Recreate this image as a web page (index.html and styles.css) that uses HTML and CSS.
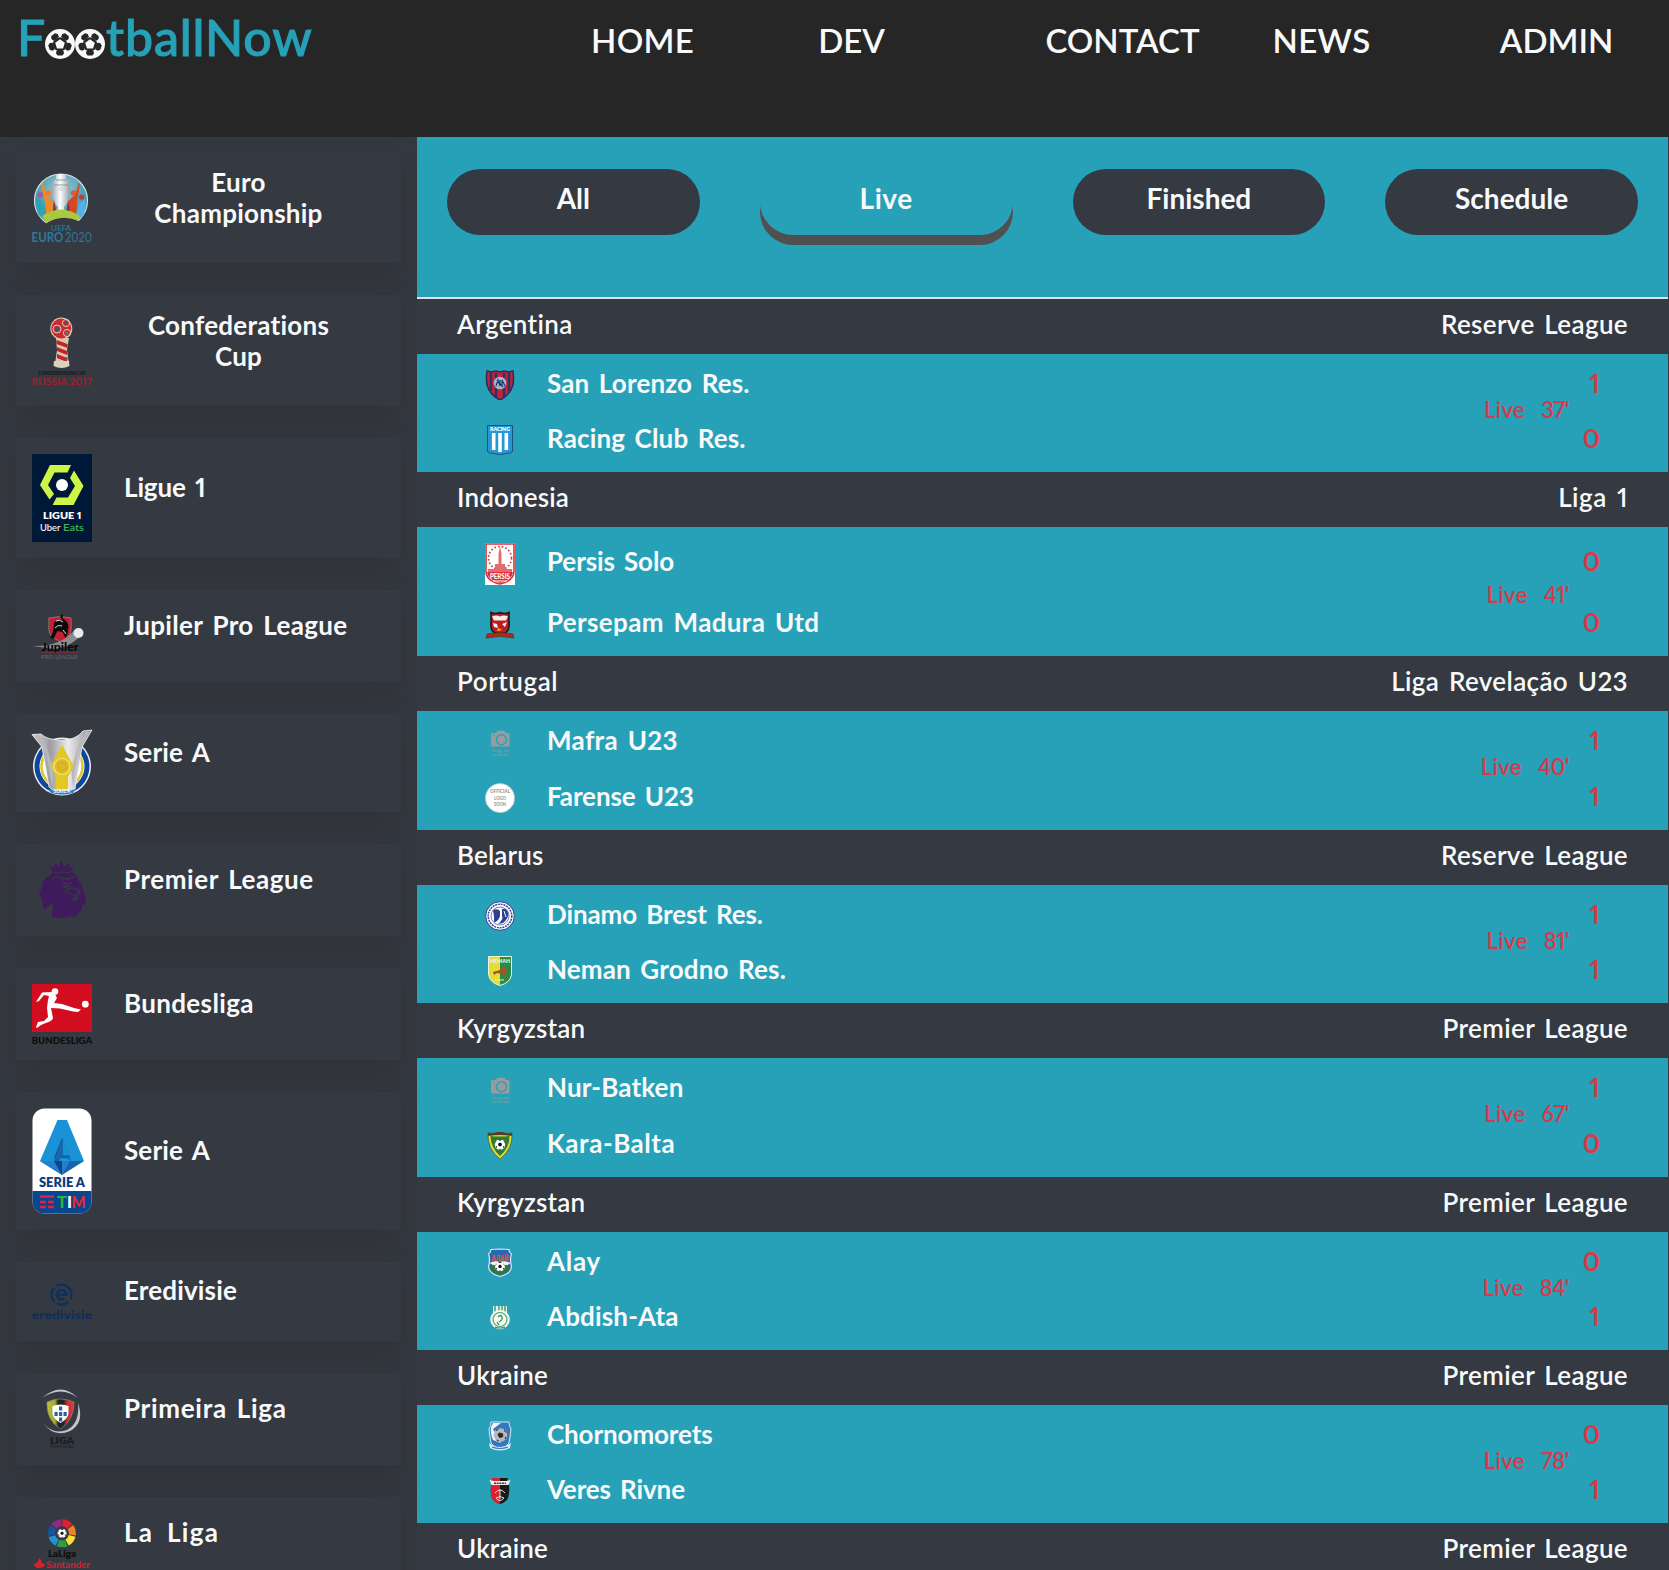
FILE: index.html
```
<!DOCTYPE html>
<html lang="en">
<head>
<meta charset="utf-8">
<title>FootballNow</title>
<link rel="stylesheet" href="styles.css">
</head>
<body>
<svg class="defs" aria-hidden="true">
  <symbol id="futbol" viewBox="0 0 30 30">
    <circle cx="15" cy="15" r="15" fill="#f8f9fa"/>
    <g fill="#262626">
      <circle cx="15" cy="15.3" r="7"/>
      <g id="patch"><path d="M11.6 21.5h6.8l.6 2.9-1.7 2.2h-4.6l-1.7-2.2z"/></g>
      <use href="#patch" transform="rotate(72 15 15)"/>
      <use href="#patch" transform="rotate(144 15 15)"/>
      <use href="#patch" transform="rotate(216 15 15)"/>
      <use href="#patch" transform="rotate(288 15 15)"/>
    </g>
    <path d="M15 10.2l4.8 3.6-1.8 5.6h-6l-1.8-5.6z" fill="#f8f9fa"/>
  </symbol>
  <symbol id="ball" viewBox="0 0 12 12">
    <circle cx="6" cy="6" r="5.8" fill="#fff"/>
    <path d="M6 3.7l2.2 1.6-.8 2.6H4.6l-.8-2.6zM3.6.9L6 1.8 8.4.9 6 .2zM.3 5.2L1.9 3.4l-.2-1.2zM11.7 5.2L10.1 3.4l.2-1.2zM2.2 10.3l.4-2.3-1.6-.6zM9.8 10.3l-.4-2.3 1.6-.6zM4.7 11.5L6 10.4l1.3 1.1z" fill="#111"/>
  </symbol>
  <symbol id="noimage" viewBox="0 0 30 30">
    <path d="M7 6h4l1.600-2.200h6.800L21 6h2.500q1 0 1 1v11.500q0 1-1 1H7q-1 0-1-1V7q0-1 1-1z" fill="#999b9d"/>
    <circle cx="16.400" cy="12.700" r="5" fill="none" stroke="#26a1b8" stroke-width="1.500"/>
    <circle cx="8.800" cy="7.700" r=".7" fill="#26a1b8"/>
    <text x="6.500" y="24.500" textLength="18" font-size="3.800" font-weight="700" fill="#8b9699">image not</text>
    <text x="7" y="28.500" textLength="16.500" font-size="3.800" font-weight="700" fill="#8b9699">available</text>
  </symbol>
</svg>

<header class="topbar">
  <a class="brand"><span class="brand-f">F</span><svg class="brand-ball"><use href="#futbol"/></svg><svg class="brand-ball"><use href="#futbol"/></svg><span class="brand-rest">tballNow</span></a>
  <nav class="menu">
    <a class="tr-1">HOME</a><a>DEV</a><a>CONTACT</a><a class="tr-1">NEWS</a><a>ADMIN</a>
  </nav>
</header>

<div class="page">
<aside class="leagues">
  <div class="league two-lines">
    <svg width="60" height="78" viewBox="0 0 60 78">
      <defs><radialGradient id="eg" cx=".5" cy=".3" r=".7"><stop offset="0" stop-color="#9fd0d8"/><stop offset="1" stop-color="#1d7f9c"/></radialGradient>
      <linearGradient id="cupg"><stop offset="0" stop-color="#9aa4ad"/><stop offset=".45" stop-color="#fff"/><stop offset="1" stop-color="#8f9aa4"/></linearGradient>
      <clipPath id="ec"><path d="M0 0H60V48L47 52Q29 44 13 55L0 44z"/></clipPath></defs>
      <g clip-path="url(#ec)">
        <circle cx="29" cy="31.500" r="26.500" fill="url(#eg)" stroke="#d5e2e6" stroke-width="1.200"/>
        <path d="M6 45Q2 33 6 28l5 6 6 22z" fill="#2fa3b5"/><circle cx="8.500" cy="26" r="2.800" fill="#a75a9f"/>
        <path d="M9 15l2-1 4 12 5 5 4 22H15L13 33z" fill="#f08a24"/><circle cx="16.500" cy="24" r="2.800" fill="#ef7d2e"/>
        <path d="M48 15l-1-1-4 12-7 6-3 22h11L45 33z" fill="#d8481f"/><circle cx="41.500" cy="24" r="2.800" fill="#e2592a"/>
        <path d="M53 30l-6 5-6 20 10-8q4-7 2-17z" fill="#56b1e8"/><circle cx="49.500" cy="28" r="2.600" fill="#c23a3c"/>
        <path d="M22 30l4 22h-6zM36 32l-3 20h7z" fill="#8b2c53"/>
        <path d="M24 5h10v5q5 3 4 11-1 13-6 17l1 8h-8l1-8q-5-4-6-17-1-8 4-11z" fill="url(#cupg)"/>
        <path d="M24 11h10M22 16h14" stroke="#78858f" fill="none" stroke-width=".8"/><circle cx="29" cy="20" r="1.600" fill="none" stroke="#aab4bb" stroke-width=".6"/>
        <path d="M10 47q19-13 38 0l-3 8q-16-8-30 0z" fill="#a9c93f"/>
      </g>
      <text x="19" y="61.500" textLength="20" font-size="8" font-weight="700" fill="#2f6f8c">UEFA</text>
      <text x="-.5" y="73" textLength="32" lengthAdjust="spacingAndGlyphs" font-size="12.500" font-weight="700" fill="#2c7a9c">EURO</text>
      <text x="33" y="73" textLength="27" lengthAdjust="spacingAndGlyphs" font-size="12.500" font-weight="400" fill="#2c7a9c">2020</text>
    </svg>
    <h2>Euro<br>Championship</h2>
  </div>
  <div class="league two-lines confed">
    <svg width="60" height="79" viewBox="0 0 60 79">
      <path d="M24 27l1 12-2 14q6 4 14 0l-2-14 2-12z" fill="#d8c8ab"/>
      <path d="M24.500 29l11 4v4l-11-4zM25 36l10 4v4L25 40zM25 43l10 4v4l-10-4z" fill="#c8202c"/>
      <circle cx="29.300" cy="17.500" r="11" fill="#dccdb0"/><circle cx="29.300" cy="17.500" r="10" fill="#cc2a33"/>
      <g fill="none" stroke="#dccdb0" stroke-width="1"><circle cx="25" cy="18" r="4"/><circle cx="34" cy="12" r="3.600"/><circle cx="35" cy="22" r="3.600"/></g>
      <circle cx="25" cy="18" r="2" fill="#205f8c"/><circle cx="34" cy="12" r="1.500" fill="#205f8c"/><circle cx="35" cy="22" r="1.500" fill="#2e8e96"/><circle cx="34.500" cy="47.500" r="1.500" fill="#2e6f9c"/>
      <path d="M22 50h15l.5 5q-8 4-16 0z" fill="#d9d2bd"/>
      <text x="6.500" y="64.300" textLength="47" lengthAdjust="spacingAndGlyphs" font-size="4.500" font-weight="800" fill="#17191c">CONFEDERATIONS CUP</text>
      <text x="-.5" y="73.500" textLength="60.500" lengthAdjust="spacingAndGlyphs" font-size="10" font-weight="600" fill="#a81e27">RUSSIA 2017</text>
    </svg>
    <h2>Confederations<br>Cup</h2>
  </div>
  <div class="league">
    <svg width="60" height="88" viewBox="0 0 60 88">
      <path fill="#001838" d="M0 0h60v88H0z"/>
      <path fill="#cdf545" d="M18 11h21l-3.500 7.500H22.500L16 31l6 9-4.500 5.500L8 31zM42 16.500L51.500 32 41.500 51H20.500L24.500 43.500H36L43 32l-5-8z"/>
      <circle cx="30" cy="31" r="6" fill="#fff"/>
      <text x="11" y="65" textLength="38.500" lengthAdjust="spacingAndGlyphs" font-size="10" font-weight="800" fill="#fff">LIGUE 1</text>
      <text x="8" y="76.700" textLength="20.500" lengthAdjust="spacingAndGlyphs" font-size="9.500" font-weight="500" fill="#fff">Uber</text>
      <text x="31" y="76.700" textLength="21" lengthAdjust="spacingAndGlyphs" font-size="9.500" font-weight="600" fill="#41b455">Eats</text>
    </svg>
    <h2 class="tr-0">Ligue 1</h2>
  </div>
  <div class="league">
    <svg width="60" height="60" viewBox="0 0 60 60">
      <path d="M.5 40q28 1 43-17l4 8Q36 42 22 43z" fill="#8a8c90"/>
      <path d="M16.800 12q11-3 22.400 0v11q0 8-11.200 12.500Q16.800 31 16.800 23z" fill="#c41f35" stroke="#999" stroke-width=".6"/>
      <path d="M22 17q3-4 8-3l-2-4 3-2-.5 4q5 3 6 8l-1 8-2 4-3-6-5-1-4 8-3-1 3-8z" fill="#0a0a0a"/>
      <path d="M24 15q4-2 7 1M23 22q3-4 7-2M31 24l3 4" stroke="#ddd" fill="none" stroke-width="1"/>
      <circle cx="46.500" cy="27" r="5" fill="#e9e9ea"/>
      <text x="9.500" y="44.500" textLength="37" lengthAdjust="spacingAndGlyphs" font-size="11.500" font-weight="900" fill="#070707">Jupiler</text>
      <path d="M10 46.500h36" stroke="#8c2733" stroke-width=".7"/>
      <text x="9" y="52.500" textLength="37" lengthAdjust="spacingAndGlyphs" font-size="6.300" font-weight="700" fill="#5a5d61">PRO LEAGUE</text>
    </svg>
    <h2 class="tr-1">Jupiler Pro League</h2>
  </div>
  <div class="league">
    <svg width="60" height="66" viewBox="0 0 60 66">
      <defs><linearGradient id="sil"><stop offset="0" stop-color="#e2e2e4"/><stop offset=".3" stop-color="#9c9ca1"/><stop offset=".6" stop-color="#ececee"/><stop offset="1" stop-color="#8e8e93"/></linearGradient></defs>
      <circle cx="30" cy="36.500" r="29" fill="#eef0f2"/><circle cx="30" cy="36.500" r="27.500" fill="#0b489c"/><circle cx="30" cy="36.500" r="22.500" fill="#fff"/>
      <circle cx="30" cy="36.500" r="20.500" fill="none" stroke="#dfc62c" stroke-width="2.500"/>
      <path d="M0 4.500l9-.5q6 6 21 6Q44 10 51 1l9-1-10 17-7 42q-3 2-6 2H23q-3-1-6-4L10 17z" fill="url(#sil)" stroke="#f3f3f4" stroke-width=".8"/>
      <path d="M2 5.500L14 22l6 35 2-18-8-23-7-11zM58 1.500L46 22l-5 35-2-18 7-22 8-15z" fill="#b9b9bd"/>
      <path d="M30 15l11.500 21L36 47v12H24V47l-5.500-11z" fill="#e3c822"/>
      <circle cx="30" cy="36.500" r="8" fill="#dcbc26" stroke="#f3e48a" stroke-width="1.200"/><circle cx="30" cy="36.500" r="4" fill="none" stroke="#c9a91c"/>
      <path d="M16 59q14 5 28 0l-3 4q-11 3-22 0z" fill="#2f7fc4"/>
      <text x="21.500" y="63" textLength="17" lengthAdjust="spacingAndGlyphs" font-size="4.500" font-weight="800" fill="#e4eef8">SERIE A</text>
    </svg>
    <h2>Serie A</h2>
  </div>
  <div class="league">
    <svg width="60" height="60" viewBox="0 0 60 60" fill="#3f1a5c">
      <path d="M16.500 5.500l5 2.500 1-5.500 4 4.500 2.800-6 3 6 4.500-4.700.5 5.700 3.800-2-1.600 5.500q-8.500-3-19 .200z"/>
      <path d="M21 12q9-4 18 0 6 2 7 9l4 3 1 7q3 3 3 7l-1 7-2-1-2 7-4 3-3 4-2-2q-6 2-12 2l-8-1 1-15-8 8-2-3-1-8-3-5 3-7 1-6 6-6 1 2q1-4 4-5z"/>
      <path d="M23 13.500q7-3 15 0M20 19q4-4 9-1l8 1 5-2M30 22l5 2 5-1M33 31l6-3 7 1-1 8-5-3zM40 39l6-1-3 3z" fill="none" stroke="#353941" stroke-width="1.400"/>
      <path d="M27 23q6 4 12 1l-5 5zM46 28l3 4-2 5z" fill="#353941"/>
    </svg>
    <h2 class="tr-2">Premier League</h2>
  </div>
  <div class="league">
    <svg width="60" height="60" viewBox="0 0 60 60">
      <path fill="#d10d1f" d="M0 0h60v48H0z"/>
      <g fill="#fff"><circle cx="23" cy="7.500" r="3.300"/><circle cx="53.300" cy="20.200" r="3.400"/>
      <path d="M10 8.500l9.500-.5 3.500 2 2 4-3 5 8 1 12 4 7 1.500-3 2.500-5-.5-13-3-9-.5 2 10q-1 3-6 4.500l-6 2.500L5 44l-1-1 2-5 6-1 4-4-1-9 1-8 1-4-5-1-5 6-3 1z"/></g>
      <text x="-.3" y="59.500" textLength="60.500" lengthAdjust="spacingAndGlyphs" font-size="9" font-weight="900" fill="#0c0d0e">BUNDESLIGA</text>
    </svg>
    <h2 class="tr-1">Bundesliga</h2>
  </div>
  <div class="league">
    <svg width="60" height="106" viewBox="0 0 60 106">
      <defs><clipPath id="sc"><rect x=".5" y=".5" width="59" height="105" rx="12"/></clipPath></defs>
      <g clip-path="url(#sc)"><path fill="#fff" d="M0 0h60v106H0z"/><path fill="#08468f" d="M0 83h60v23H0z"/></g>
      <path d="M25.500 12h9.500L52 53H8z" fill="#1a93d6"/>
      <path d="M30 30l8 20H22z" fill="#12508f"/><path d="M30 30l9 23-5-4h-5l-2 4h-5z" fill="#1766b0"/><path d="M31 32l6 15h-6z" fill="#1a93d6"/>
      <path d="M8 53h44L30 67z" fill="#1563ac"/><path d="M8 53h14l8 14zM38 53H30v14z" fill="#2380cf"/><path d="M22 53h8v14z" fill="#0d4586"/>
      <text x="7" y="79" textLength="46" lengthAdjust="spacingAndGlyphs" font-size="12.500" font-weight="800" fill="#0c3c7c">SERIE A</text>
      <path d="M8 88.500h14M8 94h6M16 94h6M8 99h6M16 99h6" stroke="#e2203c" stroke-width="2.400"/>
      <g font-size="16.500" font-weight="900"><text x="25" y="100" fill="#2cb23c">T</text><text x="35" y="100" fill="#fff">I</text><text x="39.500" y="100" textLength="14" lengthAdjust="spacingAndGlyphs" fill="#ee2530">M</text></g>
    </svg>
    <h2>Serie A</h2>
  </div>
  <div class="league">
    <svg width="60" height="47" viewBox="0 0 60 47">
      <g fill="none" stroke="#0c2f5f" stroke-width="2.200"><path d="M22.500 9.500a10 10 0 0 0 0 14.500M24.500 8a10 10 0 0 1 14 13M26 16.700h8.500a4.800 4.800 0 1 0-2 4M25 25.500a10 10 0 0 0 11.500-2"/></g>
      <text x="-.5" y="40.700" textLength="60.500" lengthAdjust="spacingAndGlyphs" font-size="11.500" font-weight="900" fill="#0c2f5f">eredivisie</text>
    </svg>
    <h2>Eredivisie</h2>
  </div>
  <div class="league">
    <svg width="60" height="60" viewBox="0 0 60 60">
      <defs><linearGradient id="pg"><stop offset="0" stop-color="#b3c23a"/><stop offset=".3" stop-color="#a8a62e"/><stop offset=".42" stop-color="#222"/><stop offset=".6" stop-color="#222"/><stop offset=".75" stop-color="#c9302c"/><stop offset="1" stop-color="#dd3b36"/></linearGradient></defs>
      <path d="M10 9Q29-8 46 9 29-4 10 9zM11 34q10 12 24 7 13-7 11-27 7 20-8 28-16 7-27-8z" fill="#c3c5c7"/>
      <path d="M15 13q13-6 27 0 0 18-13.500 27Q14 31 15 13z" fill="url(#pg)" stroke="#85878a" stroke-width=".7"/>
      <path d="M20.500 17q8-3 16 0v8q-1 5-8 9-7-4-8-9z" fill="#fff"/>
      <g fill="#2b5f9e"><rect x="27" y="17.500" width="3.200" height="4"/><rect x="27" y="23" width="3.200" height="4"/><rect x="27" y="28.500" width="3.200" height="4"/><rect x="22.500" y="23" width="3.200" height="4"/><rect x="31.500" y="23" width="3.200" height="4"/></g>
      <text x="18" y="55" textLength="24" lengthAdjust="spacingAndGlyphs" font-size="10" font-weight="800" fill="#1b1c1e">LIGA</text>
      <text x="18" y="59.300" textLength="24" lengthAdjust="spacingAndGlyphs" font-size="4" font-weight="700" fill="#222427">PORTUGAL</text>
    </svg>
    <h2 class="tr-3">Primeira Liga</h2>
  </div>
  <div class="league">
    <svg width="60" height="60" viewBox="0 0 60 60">
      <g fill="none" stroke-width="7"><g transform="rotate(-88 30 20.300)">
        <circle cx="30" cy="20.300" r="10.500" pathLength="70" stroke="#e01f2e" stroke-dasharray="9 61"/>
        <circle cx="30" cy="20.300" r="10.500" pathLength="70" stroke="#ee8224" stroke-dasharray="9 61" stroke-dashoffset="-10"/>
        <circle cx="30" cy="20.300" r="10.500" pathLength="70" stroke="#fbe038" stroke-dasharray="9 61" stroke-dashoffset="-20"/>
        <circle cx="30" cy="20.300" r="10.500" pathLength="70" stroke="#2f9c48" stroke-dasharray="9 61" stroke-dashoffset="-30"/>
        <circle cx="30" cy="20.300" r="10.500" pathLength="70" stroke="#2390d0" stroke-dasharray="9 61" stroke-dashoffset="-40"/>
        <circle cx="30" cy="20.300" r="10.500" pathLength="70" stroke="#1a539c" stroke-dasharray="9 61" stroke-dashoffset="-50"/>
        <circle cx="30" cy="20.300" r="10.500" pathLength="70" stroke="#8d2a86" stroke-dasharray="9 61" stroke-dashoffset="-60"/></g></g>
      <use href="#ball" x="25.300" y="15.500" width="9.500" height="9.500"/>
      <text x="16" y="43.500" textLength="28" lengthAdjust="spacingAndGlyphs" font-size="9.500" font-weight="800" fill="#0e0f10">LaLiga</text>
      <path d="M7.500 45q3 3 1.500 4.500 4 1 3.500 3-1 2.500-5.200 2.500T2 52.500q0-2 3.500-3Q6 47.500 7.500 45z" fill="#d8202f"/>
      <text x="14" y="54.500" textLength="44" lengthAdjust="spacingAndGlyphs" font-size="10" font-weight="700" fill="#d8202f">Santander</text>
    </svg>
    <h2 class="tr-5">La Liga</h2>
  </div>
</aside>

<main class="matches">
  <div class="tabs"><a class="tab">All</a><a class="tab active tr-2">Live</a><a class="tab">Finished</a><a class="tab">Schedule</a></div>

  <section>
    <div class="comp"><span class="tr-1">Argentina</span><span class="tr-1">Reserve League</span></div>
    <div class="match">
      <svg class="crest" viewBox="0 0 30 30"><path d="M2 1l4 1 5-1 4 1 4-1 5 1 4-1q1 8 0 14-3 10-13 15Q5 25 2 15 1 8 2 1z" fill="#c8203a" stroke="#263056" stroke-width="1.500"/><path d="M6 3v18M11 3v24M19 3v24M24 3v18" stroke="#263668" stroke-width="2.500"/><circle cx="15" cy="13" r="6.300" fill="#a7b4cc"/><path d="M11 16l2-6 2 6M15 10v6M17 16v-6l3 6M12 10l6 7" stroke="#24386c" fill="none" stroke-width="1.200"/></svg>
      <span class="team">San Lorenzo Res.</span><span class="score">1</span>
      <span class="clock"><span>Live</span><span>37'</span></span>
      <svg class="crest" viewBox="0 0 30 30"><path d="M2.500.500h25v26q-2 2-7 2l-5.500 1.500L9.500 28.500q-5 0-7-2z" fill="#2797d6" stroke="#1b4f7c"/><text x="5" y="6" textLength="20" lengthAdjust="spacingAndGlyphs" font-size="5.500" font-weight="800" fill="#fff">RACING</text><path d="M8.700 8v17M15 8v19M21.300 8v17" stroke="#fff" stroke-width="3.600"/></svg>
      <span class="team">Racing Club Res.</span><span class="score">0</span>
    </div>
  </section>
  <section>
    <div class="comp"><span>Indonesia</span><span class="tr-2">Liga 1</span></div>
    <div class="match tall">
      <svg class="crest" viewBox="0 0 30 42"><path fill="#fff" d="M0 0h30v42H0z"/><path d="M1 1h28v27q0 10-14 13Q1 38 1 28z" fill="#fff" stroke="#e1303a" stroke-width="1.600"/><circle cx="15" cy="15" r="11.500" fill="none" stroke="#d93640" stroke-width="1.600" stroke-dasharray="1.700 2"/><path d="M15 3l1.500 8v10H20v5h7v3H3v-3h7v-5h3.500V11z" fill="#e06c70"/><path d="M2 29h26q-1 8-13 11Q3 37 2 29z" fill="#dd2c36"/><text x="5" y="35.500" textLength="20" lengthAdjust="spacingAndGlyphs" font-size="6.500" font-weight="900" fill="#fff">PERSIS</text><path d="M8 38h14" stroke="#fff"/></svg>
      <span class="team tr-0">Persis Solo</span><span class="score">0</span>
      <span class="clock"><span>Live</span><span>41'</span></span>
      <svg class="crest" viewBox="0 0 30 30"><path d="M6 2.500q4 2 9 0 5 2 9 0v9q1 8-3 11-6 2-12 0-4-3-3-11z" fill="#c01d20" stroke="#1b1511" stroke-width="1.500"/><path d="M7 6.500q4-2 8 0 4-2 8 0l-2 4H9z" fill="#eee"/><path d="M8 13l4 1 1 4-4-1zM22 12l-5 2 3 3z" fill="#eee"/><path d="M13 18l4 2-5 1z" fill="#e6c52e"/><path d="M2 24q13-3 26 0l1 4q-13-3-28 0z" fill="#b3281d" stroke="#57391c" stroke-width=".8"/></svg>
      <span class="team tr-1">Persepam Madura Utd</span><span class="score">0</span>
    </div>
  </section>
  <section>
    <div class="comp"><span class="tr-2">Portugal</span><span class="tr-1">Liga Revelação U23</span></div>
    <div class="match mid">
      <svg class="crest"><use href="#noimage"/></svg>
      <span class="team tr-1">Mafra U23</span><span class="score">1</span>
      <span class="clock"><span>Live</span><span>40'</span></span>
      <svg class="crest" viewBox="0 0 30 30"><circle cx="15" cy="15" r="14.600" fill="#fff" stroke="#b9c4c8" stroke-width=".8"/><g font-size="5" font-weight="800" fill="#9f9f9f"><text x="5" y="10" textLength="20" lengthAdjust="spacingAndGlyphs">OFFICIAL</text><text x="9" y="16.700" textLength="12" lengthAdjust="spacingAndGlyphs">LOGO</text><text x="9" y="23.300" textLength="12" lengthAdjust="spacingAndGlyphs">SOON</text></g></svg>
      <span class="team tr-0">Farense U23</span><span class="score">1</span>
    </div>
  </section>
  <section>
    <div class="comp"><span>Belarus</span><span class="tr-1">Reserve League</span></div>
    <div class="match">
      <svg class="crest" viewBox="0 0 30 30"><circle cx="15" cy="15" r="14.300" fill="#fff" stroke="#2c3f94" stroke-width="1"/><circle cx="15" cy="15" r="11.800" fill="none" stroke="#35479b" stroke-width="1.500" stroke-dasharray="2 .8"/><circle cx="15" cy="15" r="9" fill="#fff" stroke="#35479b" stroke-width=".7"/><path d="M8 9q5-2 7 1v5q-2 6-6 6v-6zM17 8q5-1 6 4t-5 10l-5 1q6-5 4-8z" fill="#2c3f94"/><path d="M19 10l2 6" stroke="#fff"/></svg>
      <span class="team tr-0">Dinamo Brest Res.</span><span class="score">1</span>
      <span class="clock"><span>Live</span><span>81'</span></span>
      <svg class="crest" viewBox="0 0 30 30"><path d="M3.500.500h23v18q-1 8-11.500 11Q4.500 26.500 3.500 18.500z" fill="#e7dc34"/><path d="M15 .5h11.500v18q-1 8-11.500 11z" fill="#2a8b46"/><path d="M3.500.500h23v18q-1 8-11.500 11Q4.500 26.500 3.500 18.500z" fill="none" stroke="#eef3dc"/><text x="5" y="7" textLength="20" lengthAdjust="spacingAndGlyphs" font-size="6" font-weight="900" fill="#f2f5e8">HEMAH</text><path d="M8 16l7-2 4-5 1 3 3 2-3 2 2 6-5-4-5-1-3 2z" fill="#a0552c"/><path d="M10 24h9" stroke="#e8efc0"/></svg>
      <span class="team">Neman Grodno Res.</span><span class="score">1</span>
    </div>
  </section>
  <section>
    <div class="comp"><span>Kyrgyzstan</span><span class="tr-1">Premier League</span></div>
    <div class="match mid">
      <svg class="crest"><use href="#noimage"/></svg>
      <span class="team">Nur-Batken</span><span class="score">1</span>
      <span class="clock"><span>Live</span><span>67'</span></span>
      <svg class="crest" viewBox="0 0 30 30"><path d="M3 3q12 1 24 0 1 16-12 26Q2 19 3 3z" fill="#e6d836" stroke="#244f21" stroke-width=".6"/><path d="M5.500 6q9 1 19 0 0 12-9.500 20Q6 18 5.500 6z" fill="#2d7c2f"/><path d="M2.500 3Q9 4 12 2h6q3 2 9.500 1l-1 3Q15 4 3.500 6z" fill="#5b3a1c"/><use href="#ball" x="9.500" y="9" width="11" height="11"/></svg>
      <span class="team tr-2">Kara-Balta</span><span class="score">0</span>
    </div>
  </section>
  <section>
    <div class="comp"><span>Kyrgyzstan</span><span class="tr-1">Premier League</span></div>
    <div class="match">
      <svg class="crest" viewBox="0 0 30 30"><path d="M6 1.500l9-.5 9 .5q0 3 2.500 4.500-2 4 0 13-1 7-11.500 9.500Q4.500 26 3.500 19q2-9 0-13Q6 4.500 6 1.500z" fill="#2968b4" stroke="#dde8f0" stroke-width="1.200"/><path d="M5 18h20q0 6-10 9-10-3-10-9z" fill="#2e7a3a"/><path d="M4.500 15q5-3 10-1 6-2 11 1l-3 2H8z" fill="#eef3f6"/><text x="6.500" y="12.500" textLength="17" lengthAdjust="spacingAndGlyphs" font-size="7" font-weight="900" fill="#ff4c30">АЛАЙ</text><use href="#ball" x="10" y="13.500" width="10" height="10"/></svg>
      <span class="team tr-3">Alay</span><span class="score">0</span>
      <span class="clock"><span>Live</span><span>84'</span></span>
      <svg class="crest" viewBox="0 0 30 30"><path d="M8 3h14v9H8z" fill="#e8f3ea"/><path d="M10 3v7M14 3v6M17 3v6M20 3v7" stroke="#4a9d6a" stroke-width="1.500"/><circle cx="15" cy="16.500" r="9.600" fill="#f5faf5" stroke="#d3e6da" stroke-width=".5"/><circle cx="15" cy="16.500" r="7" fill="none" stroke="#4a9d6a" stroke-width="1.100"/><path d="M13 14q3-3 4 0t-3 5M12 19l2 3" stroke="#39925c" stroke-width="1.300" fill="none"/><path d="M10 24q5 2 10 0" stroke="#2f8a55" stroke-width="1.200" fill="none"/></svg>
      <span class="team">Abdish-Ata</span><span class="score">1</span>
    </div>
  </section>
  <section>
    <div class="comp"><span>Ukraine</span><span class="tr-1">Premier League</span></div>
    <div class="match">
      <svg class="crest" viewBox="0 0 30 30"><path d="M6 1h18q0 4 2 7-1 9-2 14-3 5-9 6-6-1-9-6-1-5-2-14Q6 5 6 1z" fill="#3377bd" stroke="#dbe8f2" stroke-width="1"/><path d="M8 2h8L8 8l8 14-8-3Q5 12 6 6z" fill="#eef4f9"/><circle cx="15.500" cy="14" r="6.800" fill="#b6babf"/><path d="M14 12l3.500.7.3 3-3.200.8-1.600-2.500zM11 9.500l2.500-1M19 9l2 2.500M11.500 19l2.500 1M20 18l1-2.500" fill="#2a2a2d" stroke="#2a2a2d" stroke-width="1"/><path d="M4 22q11 8 22 0l-1 5q-10 5-20 0z" fill="#dfeaf4"/><path d="M7 26q8 3 16 0" stroke="#3377bd" stroke-width="1.200" fill="none"/></svg>
      <span class="team tr-0">Chornomorets</span><span class="score">0</span>
      <span class="clock"><span>Live</span><span>78'</span></span>
      <svg class="crest" viewBox="0 0 30 30"><path d="M7 2h16l-1 4 2 3q1 10-2 15-3 3-7 4-4-1-7-4-3-5-2-15l2-3z" fill="#1c191b"/><path d="M7 2h8v26q-4-1-7-4-3-5-2-15l2-3z" fill="#e0202f"/><path d="M4.500 4l4 1h13l4-1-2 5H6.500z" fill="#f1efee"/><path d="M9 7.200h12" stroke="#333" stroke-width="1.600" stroke-dasharray="2 .7"/><path d="M10 17q5-6 10 0M15 13v10M11 22q4-3 8 0-4 5-8 0z" stroke="#ddd" fill="none"/></svg>
      <span class="team tr-0">Veres Rivne</span><span class="score">1</span>
    </div>
  </section>
  <section>
    <div class="comp"><span>Ukraine</span><span class="tr-1">Premier League</span></div>
  </section>
</main>
</div>
</body>
</html>
```
FILE: styles.css
```
* { box-sizing: border-box; }

body {
  margin: 0;
  height: 1570px;
  overflow: hidden;
  background: #353941;
  color: #f8f9fa;
  font-family: Lato, "Liberation Sans", sans-serif;
  font-feature-settings: "pnum";
}

.defs { display: none; }

/* Letter tracking steps */
.tr-0 { letter-spacing: -0.12px !important; }
.tr-1 { letter-spacing: 0.35px !important; }
.tr-2 { letter-spacing: 0.55px !important; }
.tr-3 { letter-spacing: 0.7px !important; }
.tr-5 { letter-spacing: 1.3px !important; word-spacing: 6px !important; }

/* Top bar */
.topbar {
  display: flex;
  height: 137px;
  background: #262626;
}
.brand {
  display: flex;
  flex: none;
  width: 575px;
  padding-left: 17px;
  color: #26a1b8;
  font-size: 50px;
  font-weight: 500;
  line-height: 74px;
  -webkit-text-stroke: 1px #26a1b8;
}
.brand-f { width: 28px; }
.brand-ball {
  width: 30px;
  height: 30px;
  margin-top: 29px;
}
.brand-rest {
  margin-left: 1px;
  letter-spacing: 0.85px;
  white-space: nowrap;
}
.menu {
  display: grid;
  grid-template-columns: repeat(5, 227.2px);
  flex: none;
  margin-left: 16px;
  font-size: 33px;
  font-weight: 600;
  line-height: 80px;
}

/* Columns */
.page { display: flex; height: 1433px; }

/* League list */
.leagues {
  display: flex;
  flex-direction: column;
  flex: none;
  gap: 32px;
  width: 417px;
  padding: 16px;
  overflow: hidden;
}
.league {
  display: flex;
  flex: none;
  align-items: center;
  padding: 16px;
  background: #353941;
  box-shadow: 0 12px 30px rgba(32, 36, 30, 0.28);
}
.league svg { flex: none; overflow: visible; }
.league h2 {
  margin: -3px 0 0;
  padding: 0 0 19px 32px;
  font-size: 26px;
  font-weight: 700;
  line-height: 31px;
  letter-spacing: 0.15px;
  word-spacing: 3px;
}
.two-lines h2 {
  margin-top: -2px;
  width: 293px;
  padding: 0 0 18px;
  text-align: center;
  letter-spacing: 0.25px;
}
.two-lines.confed { height: 111px; }

/* Match list */
.matches { width: 1251px; }
.tabs {
  display: grid;
  grid-template-columns: repeat(4, 1fr);
  height: 162px;
  background: #26a1b8;
  border-bottom: 2px solid #dee2e6;
}
.tab {
  height: 66px;
  margin: 32px 30px 0;
  border-radius: 33px;
  background: #353941;
  font-size: 28px;
  font-weight: 700;
  line-height: 59px;
  text-align: center;
}
.tab.active {
  background: #26a1b8;
  box-shadow: 0 10px 0 #505050;
}
.comp {
  display: flex;
  justify-content: space-between;
  height: 55px;
  padding: 0 40px;
  font-size: 26px;
  font-weight: 600;
  line-height: 50px;
  letter-spacing: 0.15px;
  word-spacing: 3px;
}
.match {
  display: grid;
  grid-template-columns: 30px 1fr auto;
  grid-template-rows: 30px 25px 30px;
  height: 118px;
  padding: 16px 68px 0 68px;
  background: #26a1b8;
}
.match.tall { grid-template-rows: 42px 25px 30px; height: 129px; }
.match.mid { grid-template-rows: 30px 26px 30px; height: 119px; }
.crest {
  width: 30px;
  height: 100%;
}
.team, .score {
  align-self: center;
  height: 30px;
  font-size: 26px;
  font-weight: 700;
  line-height: 26px;
}
.match.tall .team, .match.tall .score { line-height: 25px; }
.team {
  padding-left: 32px;
  letter-spacing: 0.15px;
  word-spacing: 3px;
}
.score { color: #d93a4b; text-align: right; }
.clock {
  display: flex;
  grid-column: 1 / -1;
  justify-content: flex-end;
  gap: 16px;
  padding-right: 31px;
  color: #d93a4b;
  font-size: 22px;
  font-weight: 600;
  line-height: 20px;
}
.clock span:first-child { letter-spacing: 0.4px; }
.clock span:last-child { letter-spacing: -0.4px; }
```
